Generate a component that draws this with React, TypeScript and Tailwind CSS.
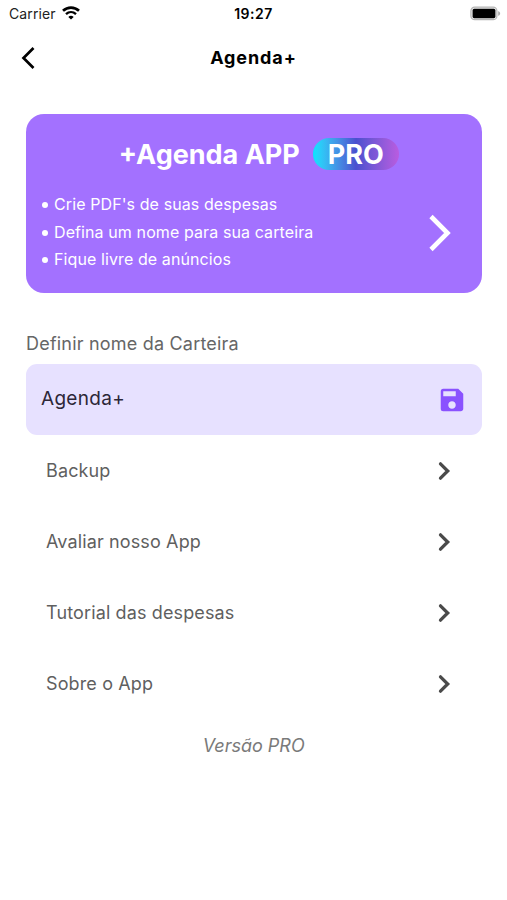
import React from 'react';
import { MdSave } from 'react-icons/md';

const benefits = [
  "Crie PDF's de suas despesas",
  'Defina um nome para sua carteira',
  'Fique livre de anúncios',
];

const menuItems = ['Backup', 'Avaliar nosso App', 'Tutorial das despesas', 'Sobre o App'];

function StatusBar() {
  return (
    <div className="grid grid-cols-3 items-center h-7 pl-[9px] pr-[6px] text-black">
      <div className="flex items-center gap-[6px]">
        <span className="text-[14px] leading-7 tracking-[0.1px] text-[#222]">Carrier</span>
        <svg width="18" height="14" viewBox="0 0 18 14" fill="none" className="-mt-[2px]">
          <path d="M1 4.8C5.6 0.6 12.4 0.6 17 4.8" stroke="currentColor" strokeWidth="2.7" />
          <path d="M4 8.1C6.9 5.5 11.1 5.5 14 8.1" stroke="currentColor" strokeWidth="2.4" />
          <path d="M9 13.6L6.3 10.9C7.9 9.5 10.1 9.5 11.7 10.9Z" fill="currentColor" />
        </svg>
      </div>
      <span className="text-center text-[14px] leading-7 font-semibold tracking-[0.5px] pr-[3px]">19:27</span>
      <svg className="justify-self-end -mt-[2px]" width="31" height="15" viewBox="0 0 31 15">
        <rect x="0.9" y="1.1" width="26" height="12.6" rx="3.8" fill="#ededed" stroke="#b5b5b5" strokeWidth="1.2" />
        <rect x="2.6" y="2.8" width="22.8" height="9.4" rx="1.6" fill="#000" />
        <path d="M28.2 5.2C30.8 5.9 30.8 9 28.2 9.7Z" fill="#aaa" />
      </svg>
    </div>
  );
}

export default function App() {
  return (
    <div className="min-h-screen bg-white font-['Inter',sans-serif]">
      <StatusBar />

      {/* Header */}
      <header className="grid grid-cols-[40px_1fr_40px] items-center h-[59px] px-5">
        <svg width="16" height="24" viewBox="0 0 16 24" fill="none">
          <path d="M13.5 2L3.5 12L13.5 22" stroke="#000" strokeWidth="2.7" />
        </svg>
        <h1 className="text-center text-[18px] font-bold tracking-[0.9px] text-black">Agenda+</h1>
      </header>

      <main className="flex flex-col pl-[26px] pr-[25.5px] pt-[27px]">
        {/* Pro banner */}
        <section className="h-[179px] rounded-[18px] bg-[#a371ff] text-white">
          <div className="flex items-center justify-center gap-[13px] pt-[24px] pl-[10px]">
            <h2 className="text-[27px] leading-[34px] -mb-[2px] font-bold">+Agenda APP</h2>
            <span className="w-[86px] h-8 rounded-full bg-linear-to-r from-[#00e5ff] via-[#4a4fcf] to-[#b95ce0] text-center text-[27px] leading-[34px] font-bold">
              PRO
            </span>
          </div>
          <div className="flex items-center justify-between pl-[16px] pr-[30px] pt-[21px]">
            <ul className="text-[16px] leading-[27.7px] tracking-[0.1px]">
              {benefits.map((benefit) => (
                <li key={benefit} className="flex items-center gap-[6px]">
                  <span className="size-[6px] rounded-full bg-white" />
                  {benefit}
                </li>
              ))}
            </ul>
            <svg width="24" height="38" viewBox="0 0 24 38" fill="none">
              <path d="M3 2.5L19.5 19L3 35.5" stroke="#fff" strokeWidth="4.6" />
            </svg>
          </div>
        </section>

        {/* Wallet name */}
        <label className="mt-[39px] text-[18px] leading-6 tracking-[0.2px] text-[#666]">
          Definir nome da Carteira
        </label>
        <div className="flex items-center justify-between mt-2 h-[71px] rounded-[11px] bg-[#e7e1ff] pl-[15px] pr-[15px]">
          <span className="text-[19px] tracking-[0.3px] text-[#2d2738]">Agenda+</span>
          <MdSave className="size-[30px] text-[#8a52ff]" />
        </div>

        {/* Menu */}
        <nav className="pl-[20px] pr-[31px]">
          {menuItems.map((item) => (
            <a key={item} className="flex items-center justify-between h-[71px] text-[18px] tracking-[0.13px] text-[#5f5f5f]">
              {item}
              <svg width="14" height="20" viewBox="0 0 14 20" fill="none">
                <path d="M3.5 2.8L10.7 10L3.5 17.2" stroke="#4a4a4a" strokeWidth="3.3" strokeLinecap="round" />
              </svg>
            </a>
          ))}
        </nav>

        <p className="mt-[15px] text-center text-[18px] leading-6 italic text-[#7a7a7a]">Versão PRO</p>
      </main>
    </div>
  );
}
